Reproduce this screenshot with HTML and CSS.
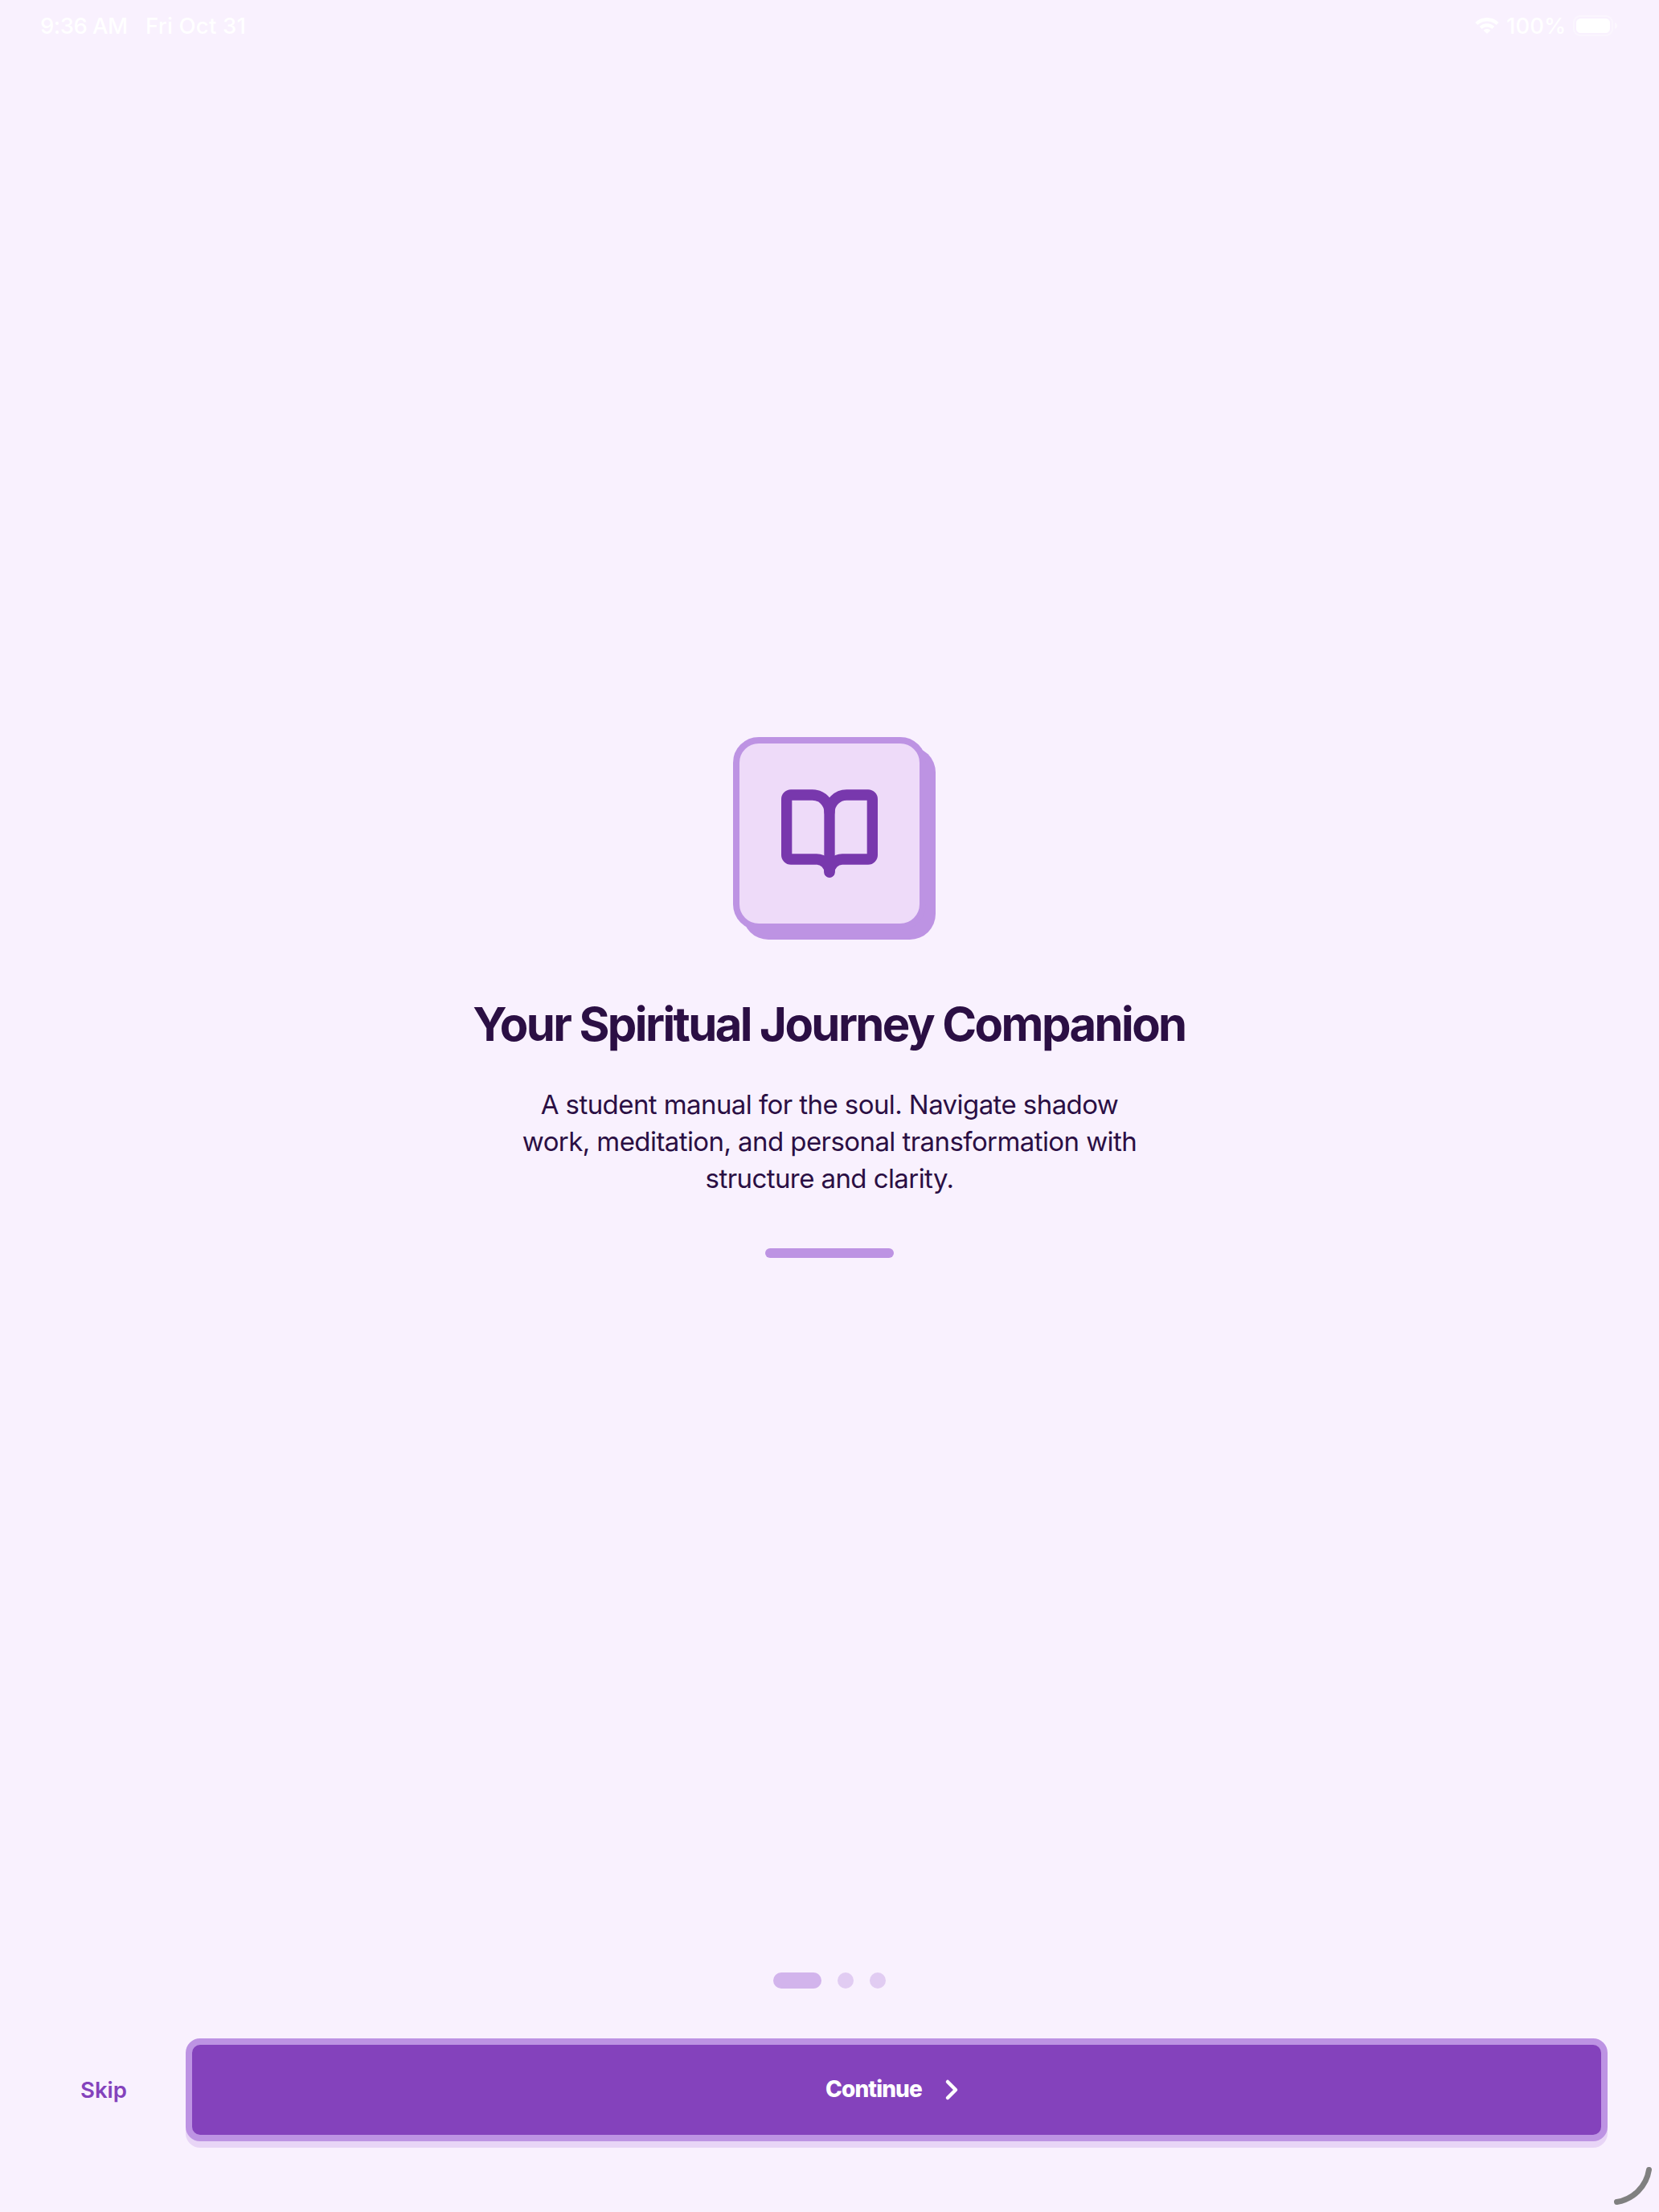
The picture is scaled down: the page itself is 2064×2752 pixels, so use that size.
FILE: index.html
```html
<!DOCTYPE html>
<html lang="en">
<head>
<meta charset="utf-8">
<title>Your Spiritual Journey Companion</title>
<link rel="stylesheet" href="styles.css">
</head>
<body>
<div class="screen">
  <header class="status">
    <div class="status-left"><span class="time">9:36 AM</span><span class="date">Fri Oct 31</span></div>
    <div class="status-right">
      <svg class="wifi" width="30" height="20" viewBox="0 0 30 20" fill="#fff">
        <path d="M15 0C20.700 0 25.900 2.200 29.700 5.900L26.700 9.100C23.700 6.200 19.600 4.400 15 4.400S6.300 6.200 3.300 9.100L.3 5.900C4.100 2.200 9.300 0 15 0Z"/>
        <path d="M15 7.200C18.700 7.200 22 8.700 24.400 11L21.300 14.100C19.700 12.500 17.500 11.500 15 11.500S10.300 12.500 8.700 14.100L5.600 11C8 8.700 11.300 7.200 15 7.200Z"/>
        <path d="M15 14.100C16.800 14.100 18.300 14.700 19.400 15.700L15 20L10.600 15.700C11.700 14.700 13.200 14.100 15 14.100Z"/>
      </svg>
      <span class="percent">100%</span>
      <svg class="battery" width="56" height="26" viewBox="0 0 56 26">
        <rect x="1" y="1" width="48" height="24" rx="8" fill="none" stroke="#fff" stroke-opacity=".4" stroke-width="2"/>
        <rect x="4" y="4" width="42" height="18" rx="5.500" fill="#fff"/>
        <path d="M52 9C54 9.700 55 11.200 55 13S54 16.300 52 17Z" fill="#fff" fill-opacity=".5"/>
      </svg>
    </div>
  </header>

  <main class="hero">
    <div class="badge">
      <svg width="128" height="128" viewBox="0 0 24 24" fill="none" stroke="currentColor" stroke-width="2.5" stroke-linecap="round" stroke-linejoin="round">
        <path d="M12 7v14"/>
        <path d="M3 18a1 1 0 0 1-1-1V4a1 1 0 0 1 1-1h5a4 4 0 0 1 4 4 4 4 0 0 1 4-4h5a1 1 0 0 1 1 1v13a1 1 0 0 1-1 1h-6a3 3 0 0 0-3 3 3 3 0 0 0-3-3z"/>
      </svg>
    </div>
    <h1 class="title">Your Spiritual Journey Companion</h1>
    <p class="copy"><span class="line">A student manual for the soul. Navigate shadow</span> <span class="line">work, meditation, and personal transformation with</span> <span class="line">structure and clarity.</span></p>
    <div class="rule"></div>
  </main>

  <footer class="footer">
    <div class="dots"><i class="dot active"></i><i class="dot"></i><i class="dot"></i></div>
    <div class="actions">
      <button class="skip">Skip</button>
      <button class="continue"><span class="label">Continue</span>
        <svg width="40" height="40" viewBox="0 0 24 24" fill="none" stroke="#fff" stroke-width="2.700" stroke-linecap="round" stroke-linejoin="round"><path d="m9 18 6-6-6-6"/></svg>
      </button>
    </div>
  </footer>
  <svg class="corner" width="56" height="56" viewBox="0 0 56 56" fill="none" stroke="#808080" stroke-width="7" stroke-linecap="round"><path d="M47.500 7.500A48 48 0 0 1 7.500 47.500"/></svg>
</div>
</body>
</html>
```
FILE: styles.css
```css
* { box-sizing: border-box; }
body { margin: 0; background: #f9f1fe; font-family: Inter, "Liberation Sans", sans-serif; }
button { font: inherit; margin: 0; padding: 0; border: 0; background: none; }
svg { display: block; flex: none; }

.screen { position: relative; display: flex; flex-direction: column; width: 2064px; height: 2752px; overflow: hidden; }

.status { display: flex; justify-content: space-between; height: 48px; padding: 0 51px 0 50px; color: #fff; font-size: 27.5px; font-weight: 500; line-height: 34px; white-space: pre; }
.status-left, .status-right { display: flex; }
.status-left { padding-top: 15px; }
.time { width: 131px; letter-spacing: -0.5px; }
.date { letter-spacing: 0.2px; }
.percent { width: 83px; margin-left: 9px; padding-top: 15px; }
.wifi { margin-top: 22px; }
.battery { margin-top: 19px; }

.hero { flex: 1; display: flex; flex-direction: column; align-items: center; justify-content: center; color: #2b0f44; }
.badge { display: flex; align-items: center; justify-content: center; width: 240px; height: 240px; border: 8px solid #bd93e3; border-radius: 32px; background: #eedbf9; box-shadow: 12px 12px 0 #bd93e3; color: #7838ad; }
.title { margin: 79px 0 0; padding-right: 1px; font-size: 58px; font-weight: 700; line-height: 76px; letter-spacing: -2.59px; white-space: nowrap; }
.copy { margin: 39px 0 0; font-size: 33px; line-height: 46px; letter-spacing: -0.58px; text-align: center; }
.line { display: block; white-space: nowrap; }
.rule { width: 160px; height: 12px; margin-top: 64px; border-radius: 6px; background: #bd93e3; }

.footer { padding: 20px 64px 88px 60px; }
.dots { display: flex; justify-content: center; gap: 20px; margin-left: -4px; margin-right: -8px; }
.dot { width: 20px; height: 20px; border-radius: 10px; background: #e1ccf2; }
.dot.active { width: 60px; background: #d2b4ec; }
.actions { display: flex; margin-top: 62px; height: 128px; }
.skip { width: 171px; padding-left: 40px; text-align: left; color: #8442bc; font-size: 27.5px; font-weight: 600; }
.continue { flex: 1; display: flex; align-items: center; justify-content: center; gap: 17px; border: 8px solid #bd93e3; border-radius: 18px; background: #8442bc; box-shadow: 0 8px 0 #e8d5f6; color: #fff; font-size: 28px; font-weight: 800; }
.label { padding-bottom: 2px; letter-spacing: -0.9px; }

.corner { position: absolute; left: 2004px; top: 2692px; }
```
